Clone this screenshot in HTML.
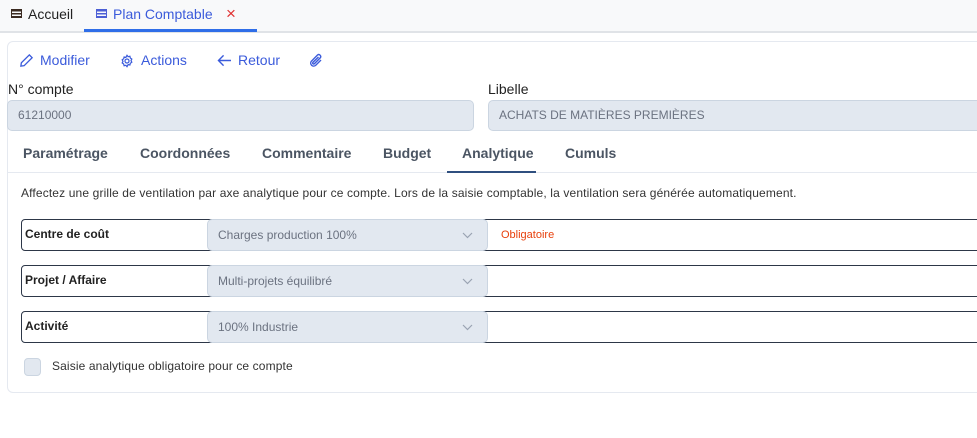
<!DOCTYPE html>
<html><head><meta charset="utf-8"><style>
*{box-sizing:border-box;margin:0;padding:0}
body{width:977px;height:438px;overflow:hidden;background:#fff;font-family:"Liberation Sans",sans-serif;position:relative}
.abs{position:absolute}
.tabbar{left:0;top:0;width:977px;height:33px;background:#f8f9fa;border-bottom:2px solid #e0e3e7}
.card{left:7px;top:41px;width:990px;height:352px;border:1px solid #e5e9f0;border-radius:6px}
.lbl{font-size:14px;color:#222}
.inp{background:#e2e8f0;border:1px solid #cbd5e1;border-radius:5px;height:31px;font-size:12px;color:#6b7280;padding:7px 10px}
.tab{font-size:14px;font-weight:bold;color:#4b5563;top:145px}
.row{left:21px;width:970px;height:32px;border:1px solid #2d3748;border-radius:4px}
.row b{position:absolute;left:3px;top:7px;font-size:12px;color:#222}
.sel{position:absolute;left:185px;top:-1px;width:281px;height:32px;background:#e2e8f0;border:1px solid #cbd5e1;border-radius:5px;font-size:12px;color:#6b7280;padding:8px 10px}
.sel svg{position:absolute;right:14px;top:12px}
.act{top:52px;font-size:14px;color:#3b5bdb}
</style></head><body>
<div class="abs tabbar"></div>
<div class="abs" style="left:11px;top:9px;width:11px;height:9px;border:1.5px solid #3a2a20;background:repeating-linear-gradient(#3a2a20 0 1.5px,transparent 1.5px 3px)"></div>
<div class="abs" style="left:28px;top:6px;font-size:14px;color:#222">Accueil</div>
<div class="abs" style="left:96px;top:9px;width:11px;height:9px;border:1.5px solid #4c5fd5;background:repeating-linear-gradient(#4c5fd5 0 1.5px,transparent 1.5px 3px)"></div>
<div class="abs" style="left:113px;top:6px;font-size:14px;color:#3b5bdb">Plan Comptable</div>
<div class="abs" style="left:226px;top:4px;font-size:17px;color:#e03131">×</div>
<div class="abs" style="left:84px;top:29px;width:173px;height:3px;background:#2f6ee8"></div>
<div class="abs card"></div>
<svg class="abs" style="left:19px;top:53px" width="15" height="15" viewBox="0 0 16 16" fill="none" stroke="#3b5bdb" stroke-width="1.4"><path d="M11 2l3 3-8.5 8.5L2 14l.5-3.5z"/></svg>
<div class="abs act" style="left:40px">Modifier</div>
<svg class="abs" style="left:120px;top:54px" width="14" height="14" viewBox="0 0 16 16" fill="none" stroke="#3b5bdb" stroke-width="1.4"><circle cx="8" cy="8" r="2.3"/><path d="M8 1.5l1.3 1.6 2-.5.5 2 1.7 1.2-.9 1.8.9 1.8-1.7 1.2-.5 2-2-.5L8 14.5l-1.3-1.6-2 .5-.5-2-1.7-1.2.9-1.8-.9-1.8 1.7-1.2.5-2 2 .5z"/></svg>
<div class="abs act" style="left:141px">Actions</div>
<svg class="abs" style="left:217px;top:54px" width="15" height="13" viewBox="0 0 16 14" fill="none" stroke="#3b5bdb" stroke-width="1.5"><path d="M15 7H2M7 1.5L1.5 7 7 12.5"/></svg>
<div class="abs act" style="left:238px">Retour</div>
<svg class="abs" style="left:308px;top:53px" width="16" height="16" viewBox="0 0 16 16" fill="none" stroke="#3b5bdb" stroke-width="1.4"><path d="M13 7l-5.5 5.5a3 3 0 01-4.2-4.2L9.5 2a2 2 0 012.8 2.8L6.3 10.8a1 1 0 01-1.4-1.4L10.5 4"/></svg>
<div class="abs lbl" style="left:8px;top:81px">N° compte</div>
<div class="abs inp" style="left:7px;top:100px;width:467px">61210000</div>
<div class="abs lbl" style="left:488px;top:81px">Libelle</div>
<div class="abs inp" style="left:488px;top:100px;width:500px">ACHATS DE MATIÈRES PREMIÈRES</div>
<div class="abs tab" style="left:23px">Paramétrage</div>
<div class="abs tab" style="left:140px">Coordonnées</div>
<div class="abs tab" style="left:262px">Commentaire</div>
<div class="abs tab" style="left:383px">Budget</div>
<div class="abs tab" style="left:462px">Analytique</div>
<div class="abs tab" style="left:565px">Cumuls</div>
<div class="abs" style="left:8px;top:172px;width:970px;height:1px;background:#e5e9f0"></div>
<div class="abs" style="left:447px;top:171px;width:89px;height:2px;background:#2f4f7f"></div>
<div class="abs" style="left:21px;top:186px;font-size:12px;color:#333;letter-spacing:0.14px;white-space:nowrap">Affectez une grille de ventilation par axe analytique pour ce compte. Lors de la saisie comptable, la ventilation sera générée automatiquement.</div>
<div class="abs row" style="top:219px"><b>Centre de coût</b><div class="sel">Charges production 100%<svg width="11" height="7" viewBox="0 0 11 7" fill="none" stroke="#9aa3b2" stroke-width="1.2"><path d="M1 1l4.5 4.5L10 1"/></svg></div><span style="position:absolute;left:479px;top:9px;font-size:11px;color:#e8400c">Obligatoire</span></div>
<div class="abs row" style="top:265px"><b>Projet / Affaire</b><div class="sel">Multi-projets équilibré<svg width="11" height="7" viewBox="0 0 11 7" fill="none" stroke="#9aa3b2" stroke-width="1.2"><path d="M1 1l4.5 4.5L10 1"/></svg></div></div>
<div class="abs row" style="top:311px"><b>Activité</b><div class="sel">100% Industrie<svg width="11" height="7" viewBox="0 0 11 7" fill="none" stroke="#9aa3b2" stroke-width="1.2"><path d="M1 1l4.5 4.5L10 1"/></svg></div></div>
<div class="abs" style="left:24px;top:358px;width:17px;height:18px;background:#e2e8f0;border:1px solid #cbd5e1;border-radius:4px"></div>
<div class="abs" style="left:52px;top:359px;font-size:12px;color:#333;letter-spacing:0.12px">Saisie analytique obligatoire pour ce compte</div>
</body></html>
